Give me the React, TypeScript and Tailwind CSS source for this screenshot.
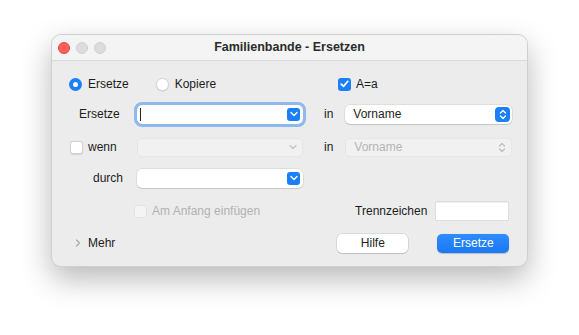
import React from 'react';

const font = { fontFamily: '"Liberation Sans", Arial, sans-serif' };

function ChevronDown({ color = 'white' }: { color?: string }) {
  return (
    <svg width="8" height="6" viewBox="0 0 8 6" fill="none">
      <path d="M1 1.5 L4 4.5 L7 1.5" stroke={color} strokeWidth="1.4" strokeLinecap="round" strokeLinejoin="round" />
    </svg>
  );
}

function UpDown({ color = 'white' }: { color?: string }) {
  return (
    <svg width="8" height="11" viewBox="0 0 8 11" fill="none">
      <path d="M1.5 4 L4 1.5 L6.5 4" stroke={color} strokeWidth="1.3" strokeLinecap="round" strokeLinejoin="round" />
      <path d="M1.5 7 L4 9.5 L6.5 7" stroke={color} strokeWidth="1.3" strokeLinecap="round" strokeLinejoin="round" />
    </svg>
  );
}

function Radio({ on }: { on?: boolean }) {
  return on ? (
    <div className="w-[13px] h-[13px] rounded-full bg-[#1a7ffb] flex items-center justify-center shrink-0">
      <div className="w-[5px] h-[5px] rounded-full bg-white" />
    </div>
  ) : (
    <div className="w-[13px] h-[13px] rounded-full bg-white border border-[#d6d6d6] shadow-[0_0.5px_1px_rgba(0,0,0,0.15)] shrink-0" />
  );
}

function Check({ on, disabled }: { on?: boolean; disabled?: boolean }) {
  if (on)
    return (
      <div className="w-[13px] h-[13px] rounded-[3px] bg-[#1a7ffb] flex items-center justify-center shrink-0">
        <svg width="9" height="8" viewBox="0 0 9 8" fill="none">
          <path d="M1.2 4.2 L3.5 6.4 L7.8 1.3" stroke="white" strokeWidth="1.7" strokeLinecap="round" strokeLinejoin="round" />
        </svg>
      </div>
    );
  return (
    <div
      className={
        'w-[13px] h-[13px] rounded-[3px] shrink-0 ' +
        (disabled
          ? 'bg-[#f4f4f4] border border-[#e2e2e2]'
          : 'bg-white border border-[#d2d2d2] shadow-[0_0.5px_1px_rgba(0,0,0,0.12)]')
      }
    />
  );
}

function Combo({ focus, disabled }: { focus?: boolean; disabled?: boolean }) {
  return (
    <div
      className={
        'w-[166px] h-[19px] rounded-[5px] flex items-center justify-end pr-[3px] relative ' +
        (disabled
          ? 'bg-[#f1f1f1] border border-[#e6e6e6]'
          : 'bg-white shadow-[0_0_0_0.5px_rgba(0,0,0,0.12),0_1px_1px_rgba(0,0,0,0.1)]') +
        (focus ? ' outline-[3px] outline-solid outline-[#8fb8f0] outline-offset-0' : '')
      }
    >
      {focus && <div className="absolute left-[3px] top-[3px] w-[1px] h-[13px] bg-[#222]" />}
      {disabled ? (
        <div className="w-[13px] h-[13px] flex items-center justify-center">
          <ChevronDown color="#c4c4c4" />
        </div>
      ) : (
        <div className="w-[13px] h-[13px] rounded-[3px] bg-[#1a7ffb] flex items-center justify-center">
          <ChevronDown />
        </div>
      )}
    </div>
  );
}

function Popup({ disabled }: { disabled?: boolean }) {
  return (
    <div
      className={
        'w-[167px] h-[19px] rounded-[5px] flex items-center pl-[8px] pr-[2px] ' +
        (disabled
          ? 'bg-[#f1f1f1] border border-[#e6e6e6] text-[#b4b4b4]'
          : 'bg-white shadow-[0_0_0_0.5px_rgba(0,0,0,0.12),0_1px_1px_rgba(0,0,0,0.12)] text-[#1e1e1e]')
      }
    >
      <span className="flex-1">Vorname</span>
      {disabled ? (
        <div className="w-[15px] h-[15px] flex items-center justify-center">
          <UpDown color="#bdbdbd" />
        </div>
      ) : (
        <div className="w-[15px] h-[15px] rounded-[4px] bg-[#1a7ffb] flex items-center justify-center">
          <UpDown />
        </div>
      )}
    </div>
  );
}

export default function App() {
  return (
    <div className="w-[579px] h-[335px] bg-white pt-[34px] pl-[51px] text-[12px] text-[#1c1c1c]" style={font}>
      <div className="w-[477px] h-[233px] rounded-[10px] bg-[#ececec] border border-[#cfcfcf] shadow-[0_12px_30px_rgba(0,0,0,0.28)] overflow-hidden flex flex-col">
        {/* Titelleiste */}
        <div className="h-[26px] bg-[#f4f4f4] border-b border-[#d9d9d9] flex items-center relative shrink-0">
          <div className="flex items-center gap-[6px] pl-[6px]">
            <div className="w-[12px] h-[12px] rounded-full bg-[#fe5f57] border border-[#e2463f]" />
            <div className="w-[12px] h-[12px] rounded-full bg-[#dcdcdc] border border-[#d0d0d0]" />
            <div className="w-[12px] h-[12px] rounded-full bg-[#dcdcdc] border border-[#d0d0d0]" />
          </div>
          <div className="absolute inset-0 flex items-center justify-center font-bold text-[12.5px] text-[#2b2b2b]">
            Familienbande - Ersetzen
          </div>
        </div>

        {/* Inhalt */}
        <div className="flex flex-col">
          <div className="h-[20px] mt-[13px] flex items-center">
            <div className="ml-[17px]"><Radio on /></div>
            <span className="ml-[6px]">Ersetze</span>
            <div className="ml-[27px]"><Radio /></div>
            <span className="ml-[6px]">Kopiere</span>
            <div className="ml-[122px]"><Check on /></div>
            <span className="ml-[5px]">A=a</span>
          </div>

          <div className="h-[20px] mt-[10px] flex items-center">
            <span className="w-[85px] pl-[27px]">Ersetze</span>
            <Combo focus />
            <span className="ml-[21px]">in</span>
            <div className="ml-[12px]"><Popup /></div>
          </div>

          <div className="h-[20px] mt-[13px] flex items-center">
            <div className="w-[85px] pl-[18px] flex items-center">
              <Check />
              <span className="ml-[5px]">wenn</span>
            </div>
            <Combo disabled />
            <span className="ml-[21px]">in</span>
            <div className="ml-[12px]"><Popup disabled /></div>
          </div>

          <div className="h-[20px] mt-[11px] flex items-center">
            <span className="w-[85px] pl-[41px]">durch</span>
            <Combo />
          </div>

          <div className="h-[20px] mt-[13px] flex items-center">
            <div className="ml-[82px]"><Check disabled /></div>
            <span className="ml-[5px] text-[#b2b2b2]">Am Anfang einfügen</span>
            <span className="ml-[95px]">Trennzeichen</span>
            <div className="ml-[9px] w-[72px] h-[18px] bg-white shadow-[0_0_0_0.5px_rgba(0,0,0,0.12),inset_0_1px_0_rgba(0,0,0,0.06)]" />
          </div>

          <div className="h-[20px] mt-[12px] flex items-center">
            <svg className="ml-[23px]" width="6" height="8" viewBox="0 0 6 8" fill="none">
              <path d="M1.5 1 L4.5 4 L1.5 7" stroke="#a8a8a8" strokeWidth="1.2" strokeLinecap="round" strokeLinejoin="round" />
            </svg>
            <span className="ml-[7px]">Mehr</span>
            <button className="ml-[222px] w-[71px] h-[19px] rounded-[5px] bg-white shadow-[0_0_0_0.5px_rgba(0,0,0,0.15),0_1px_1px_rgba(0,0,0,0.12)] text-[12px] text-[#222]">
              Hilfe
            </button>
            <button className="ml-[29px] w-[72px] h-[19px] rounded-[5px] bg-[linear-gradient(#2f8cfd,#1a78f2)] shadow-[0_0.5px_1px_rgba(0,0,0,0.2)] text-[12px] text-white">
              Ersetze
            </button>
          </div>
        </div>
      </div>
    </div>
  );
}
